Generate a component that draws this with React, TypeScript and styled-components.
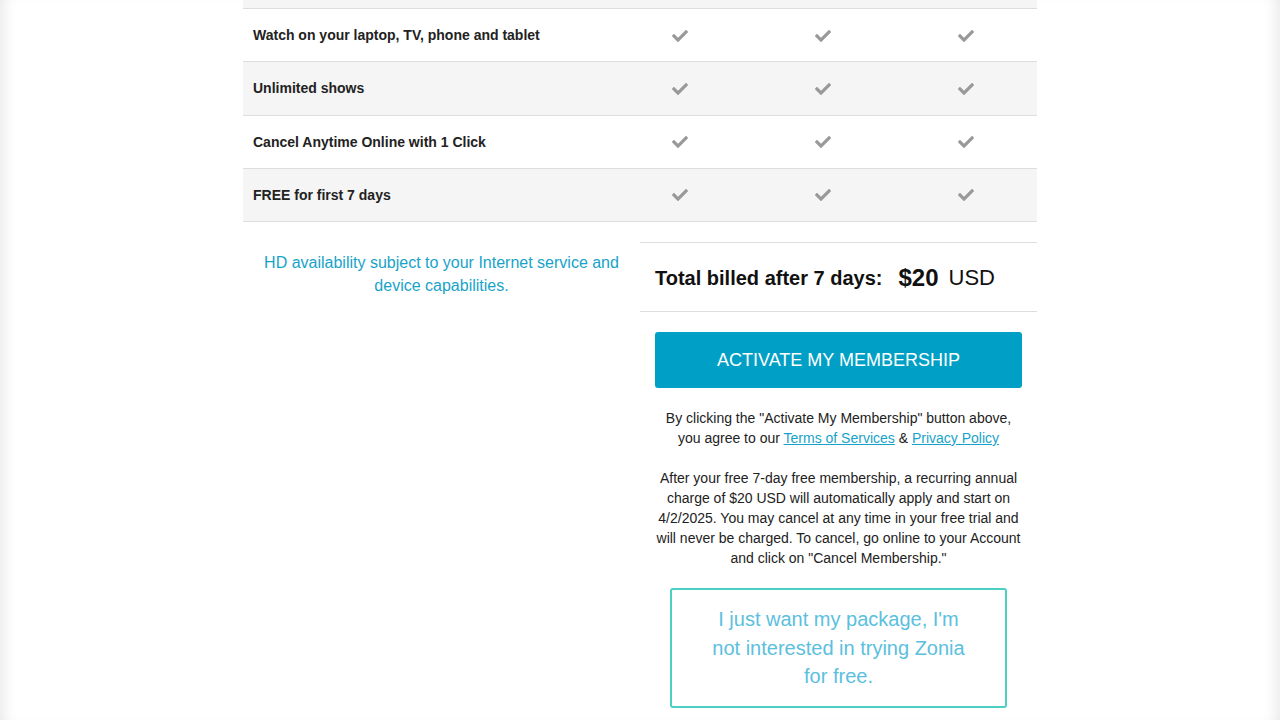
import styled, { createGlobalStyle } from "styled-components";
import { FaCheck } from "react-icons/fa";

const GlobalStyle = createGlobalStyle`
	html, body {
		margin: 0;
		padding: 0;
		background: #fff;
	}
	body {
		font-family: "Liberation Sans", Arial, sans-serif;
		color: #222;
	}
	* {
		box-sizing: border-box;
	}
`;

const Page = styled.div`
	min-height: 100vh;
	box-shadow: inset 14px 0 14px -10px rgba(0, 0, 0, 0.09),
		inset -14px 0 14px -10px rgba(0, 0, 0, 0.09);
`;

const Container = styled.div`
	width: 794px;
	margin: 0 auto;
`;

const Table = styled.div`
	display: flex;
	flex-direction: column;
`;

const Strip = styled.div`
	height: 9px;
	background: #f5f5f5;
	border-bottom: 1px solid #ddd;
`;

const Row = styled.div<{ $shaded?: boolean }>`
	display: grid;
	grid-template-columns: 366px repeat(3, 1fr);
	align-items: center;
	height: 53.25px;
	background: ${({ $shaded }) => ($shaded ? "#f5f5f5" : "#fff")};
	border-bottom: 1px solid #ddd;
`;

const Label = styled.div`
	padding-left: 10px;
	font-size: 14px;
	font-weight: bold;
	color: #222;
`;

const CheckCell = styled.div`
	display: flex;
	justify-content: center;
	color: #999;
	font-size: 16px;
	padding-top: 1px;
`;

const Bottom = styled.div`
	display: grid;
	grid-template-columns: 1fr 1fr;
	margin-top: 20px;
`;

const Note = styled.p`
	margin: 0;
	padding: 9px 15px 0;
	text-align: center;
	font-size: 16px;
	line-height: 23px;
	color: #17a3c9;
`;

const Summary = styled.div`
	display: flex;
	flex-direction: column;
`;

const Total = styled.div`
	display: flex;
	align-items: center;
	height: 70px;
	padding: 2px 15px 0;
	border-top: 1px solid #ddd;
	border-bottom: 1px solid #ddd;
`;

const TotalLabel = styled.span`
	font-size: 20px;
	font-weight: bold;
	color: #111;
	margin-right: 16px;
`;

const Price = styled.span`
	font-size: 24px;
	font-weight: bold;
	color: #111;
	margin-right: 10px;
`;

const Currency = styled.span`
	font-size: 22px;
	color: #111;
`;

const Actions = styled.div`
	display: flex;
	flex-direction: column;
	align-items: stretch;
	padding: 20px 15px 0;
`;

const ActivateButton = styled.button`
	height: 56px;
	border: none;
	border-radius: 3px;
	background: #00a0c6;
	color: #fff;
	font-family: inherit;
	font-size: 18px;
	text-transform: uppercase;
	cursor: pointer;
`;

const Fine = styled.p`
	margin: 20px 0 0;
	text-align: center;
	font-size: 14px;
	line-height: 20px;
	color: #222;

	a {
		color: #17a3c9;
		text-decoration: underline;
	}
`;

const DeclineBox = styled.div`
	margin: 20px 15px 0;
	padding: 15px 38px;
	border: 2px solid #4dd0c4;
	border-radius: 3px;
	text-align: center;
	font-size: 20px;
	line-height: 28.5px;
	color: #5bc0de;
	cursor: pointer;
`;

const features = [
	"Watch on your laptop, TV, phone and tablet",
	"Unlimited shows",
	"Cancel Anytime Online with 1 Click",
	"FREE for first 7 days",
];

function App() {
	return (
		<Page>
			<GlobalStyle />
			<Container>
				<Table>
					<Strip />
					{features.map((feature, i) => (
						<Row key={feature} $shaded={i % 2 === 1}>
							<Label>{feature}</Label>
							{[0, 1, 2].map((col) => (
								<CheckCell key={col}>
									<FaCheck />
								</CheckCell>
							))}
						</Row>
					))}
				</Table>

				<Bottom>
					<Note>
						HD availability subject to your Internet service and device
						capabilities.
					</Note>

					<Summary>
						<Total>
							<TotalLabel>Total billed after 7 days:</TotalLabel>
							<Price>$20</Price>
							<Currency>USD</Currency>
						</Total>

						<Actions>
							<ActivateButton>Activate my membership</ActivateButton>
							<Fine>
								By clicking the "Activate My Membership" button above,
								<br />
								you agree to our <a href="#">Terms of Services</a> &amp;{" "}
								<a href="#">Privacy Policy</a>
							</Fine>
							<Fine>
								After your free 7-day free membership, a recurring annual
								charge of $20 USD will automatically apply and start on
								4/2/2025. You may cancel at any time in your free trial and
								will never be charged. To cancel, go online to your Account
								and click on "Cancel Membership."
							</Fine>
							<DeclineBox>
								I just want my package, I'm not interested in trying Zonia
								for free.
							</DeclineBox>
						</Actions>
					</Summary>
				</Bottom>
			</Container>
		</Page>
	);
}

export default App;
